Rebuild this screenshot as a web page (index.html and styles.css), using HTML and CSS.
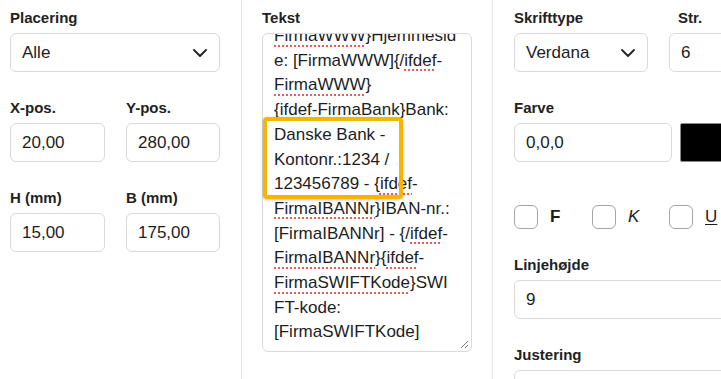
FILE: index.html
```html
<!DOCTYPE html>
<html lang="da">
<head>
<meta charset="utf-8">
<link rel="stylesheet" href="styles.css">
</head>
<body>
<div class="panel">
  <section class="col col-1">
    <div class="field">
      <div class="label">Placering</div>
      <div class="select"><span>Alle</span><svg class="chev" width="14" height="8" viewBox="0 0 14 8"><path d="M1 1l6 6 6-6" fill="none" stroke="#222" stroke-width="1.8" stroke-linecap="round" stroke-linejoin="round"/></svg></div>
    </div>
    <div class="pair">
      <div class="field">
        <div class="label">X-pos.</div>
        <div class="input">20,00</div>
      </div>
      <div class="field">
        <div class="label">Y-pos.</div>
        <div class="input">280,00</div>
      </div>
    </div>
    <div class="pair">
      <div class="field">
        <div class="label">H (mm)</div>
        <div class="input">15,00</div>
      </div>
      <div class="field">
        <div class="label">B (mm)</div>
        <div class="input">175,00</div>
      </div>
    </div>
  </section>

  <section class="col col-2">
    <div class="field">
      <div class="label">Tekst</div>
      <div class="textarea-wrap">
        <div class="textarea">
          <div class="ta-inner">
            <div><span class="sp">FirmaWWW</span>}Hjemmesid</div>
            <div>e: [FirmaWWW]{/<span class="sp">ifdef</span>-</div>
            <div><span class="sp">FirmaWWW</span>}</div>
            <div>{ifdef-FirmaBank}Bank:</div>
            <div>Danske Bank -</div>
            <div>Kontonr.:1234 /</div>
            <div>123456789 - {<span class="sp">ifdef</span>-</div>
            <div><span class="sp">FirmaIBANNr</span>}IBAN-nr.:</div>
            <div>[FirmaIBANNr] - {/<span class="sp">ifdef</span>-</div>
            <div><span class="sp">FirmaIBANNr</span>}{<span class="sp">ifdef</span>-</div>
            <div><span class="sp">FirmaSWIFTKode</span>}SWI</div>
            <div>FT-kode:</div>
            <div>[FirmaSWIFTKode]</div>
          </div>
          <svg class="grip" width="10" height="10" viewBox="0 0 10 10"><path d="M9 2L2 9M9 6L6 9" stroke="#777" stroke-width="1"/></svg>
        </div>
        <div class="highlight"></div>
      </div>
    </div>
  </section>

  <section class="col col-3">
    <div class="row-font">
      <div class="field">
        <div class="label">Skrifttype</div>
        <div class="select"><span>Verdana</span><svg class="chev" width="14" height="8" viewBox="0 0 14 8"><path d="M1 1l6 6 6-6" fill="none" stroke="#222" stroke-width="1.8" stroke-linecap="round" stroke-linejoin="round"/></svg></div>
      </div>
      <div class="field">
        <div class="label label-str">Str.</div>
        <div class="input">6</div>
      </div>
    </div>
    <div class="field">
      <div class="label">Farve</div>
      <div class="color-row">
        <div class="input color-input">0,0,0</div>
        <div class="swatch"></div>
      </div>
    </div>
    <div class="checks">
      <div class="check"><span class="box"></span><span class="b">F</span></div>
      <div class="check"><span class="box"></span><span class="i">K</span></div>
      <div class="check"><span class="box"></span><span class="u">U</span></div>
    </div>
    <div class="field">
      <div class="label">Linjehøjde</div>
      <div class="input">9</div>
    </div>
    <div class="field">
      <div class="label">Justering</div>
      <div class="input"></div>
    </div>
  </section>
</div>
</body>
</html>
```

FILE: styles.css
```css
html, body {
  margin: 0;
  padding: 0;
  background: #ffffff;
  overflow: hidden;
}
body {
  width: 721px;
  height: 379px;
  font-family: "Liberation Sans", Arial, Helvetica, sans-serif;
  color: #1d1d1f;
}
.panel {
  display: flex;
  align-items: stretch;
  height: 379px;
}
.col {
  flex: none;
  border-right: 1px solid #e6e6e6;
  padding-top: 8px;
  display: flex;
  flex-direction: column;
}
.col-1 {
  width: 210px;
  padding-left: 10px;
  padding-right: 21px;
}
.col-2 {
  width: 210px;
  padding-left: 20px;
  padding-right: 20px;
}
.col-3 {
  width: 270px;
  padding-left: 21px;
  border-right: none;
}
.field {
  display: flex;
  flex-direction: column;
  margin-bottom: 26px;
}
.label {
  font-size: 15px;
  font-weight: bold;
  line-height: 20px;
  height: 20px;
  margin-bottom: 5px;
  color: #222;
  white-space: nowrap;
}
.input, .select {
  height: 39px;
  box-sizing: border-box;
  border: 1px solid #dadada;
  border-radius: 6px;
  font-size: 17px;
  line-height: 37px;
  padding: 0 11px;
  color: #1d1d1f;
  background: #fff;
  white-space: nowrap;
  overflow: hidden;
}
.select {
  display: flex;
  align-items: center;
  justify-content: space-between;
  padding-right: 12px;
}
.chev {
  flex: none;
  margin-top: 1px;
}
.pair {
  display: grid;
  grid-template-columns: 95px 94px;
  column-gap: 21px;
}
.textarea-wrap {
  position: relative;
}
.textarea {
  position: relative;
  height: 319px;
  box-sizing: border-box;
  border: 1px solid #dadada;
  border-radius: 6px;
  overflow: hidden;
  padding: 0 11px;
  font-size: 17px;
  line-height: 24.7px;
  color: #1d1d1f;
}
.ta-inner {
  margin-top: -10px;
  white-space: nowrap;
}
.sp {
  text-decoration: underline dotted #ee5a5a;
  text-decoration-thickness: 2px;
  text-underline-offset: 4px;
}
.grip {
  position: absolute;
  right: 2px;
  bottom: 2px;
}
.highlight {
  position: absolute;
  left: 1px;
  top: 84px;
  width: 140px;
  height: 82px;
  box-sizing: border-box;
  border: 4px solid #f7b500;
  border-radius: 4px;
  box-shadow: 0 1px 3px rgba(0,0,0,0.25);
}
.row-font {
  display: grid;
  grid-template-columns: 134px 90px;
  column-gap: 21px;
}
.label-str {
  padding-left: 9px;
}
.color-row {
  display: flex;
  gap: 8px;
}
.color-input {
  width: 158px;
  flex: none;
}
.swatch {
  width: 60px;
  height: 39px;
  box-sizing: border-box;
  background: #000;
  border: 1px solid #8a8a8a;
  border-radius: 2px;
  flex: none;
}
.checks {
  display: flex;
  align-items: center;
  margin-top: 17px;
  margin-bottom: 26px;
  height: 24px;
}
.check {
  width: 78px;
  display: flex;
  align-items: center;
  gap: 12px;
  font-size: 17px;
}
.check:nth-child(2) {
  width: 77px;
}
.box {
  width: 24px;
  height: 24px;
  box-sizing: border-box;
  border: 1px solid #a5a5a5;
  border-radius: 6px;
  flex: none;
}
.b { font-weight: bold; }
.i { font-style: italic; }
.u { text-decoration: underline; text-underline-offset: 2px; }
```
